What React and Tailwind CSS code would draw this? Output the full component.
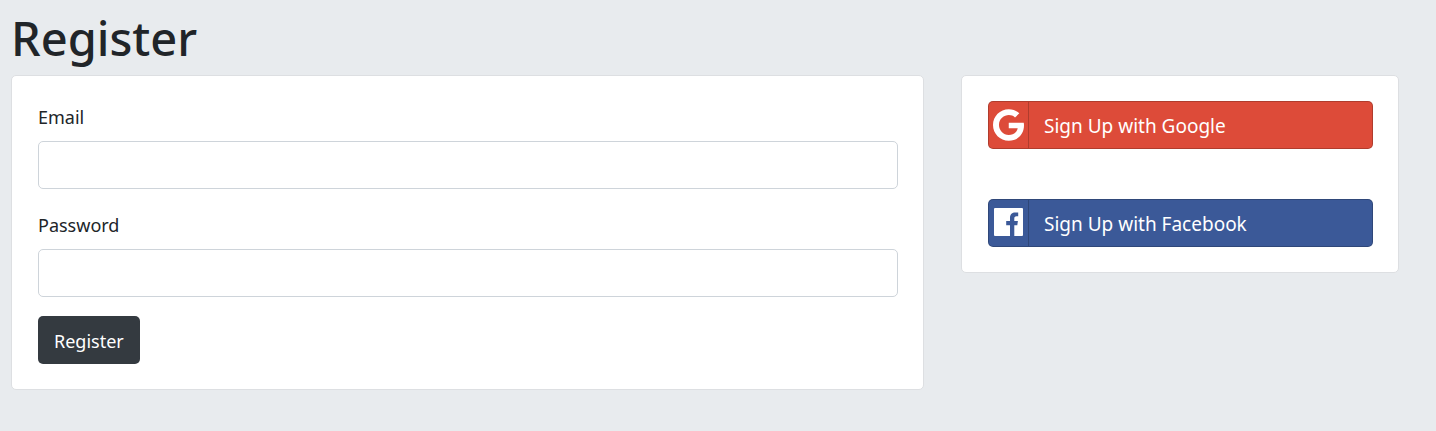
function GoogleIcon() {
  return (
    <svg viewBox="0 8 488 496" className="h-8 w-[31px]" fill="currentColor" aria-hidden="true">
      <path d="M488 261.8C488 403.3 391.1 504 248 504 110.8 504 0 393.2 0 256S110.8 8 248 8c66.8 0 123 24.5 166.3 64.9l-67.5 64.9C258.5 52.6 94.3 116.6 94.3 256c0 86.5 69.1 156.6 153.7 156.6 98.2 0 135-70.4 140.8-106.9H248v-85.3h236.1c2.3 12.7 3.9 24.9 3.9 41.4z" />
    </svg>
  );
}

function FacebookIcon() {
  return (
    <svg viewBox="0 0 29 28" className="mb-0.5 h-7 w-[29px]" fill="currentColor" aria-hidden="true">
      <path d="M1 0H28Q29 0 29 1V27Q29 28 28 28H20.3V17.2H23.3L23.9 13H20.3V10.6C20.3 9.2 20.8 8.3 22.5 8.3H24.2V4.6C23.6 4.5 22.5 4.4 21.2 4.4C18.2 4.4 16 6.2 16 9.7V13H12.2V17.2H16V28H1Q0 28 0 27V1Q0 0 1 0Z" />
    </svg>
  );
}

function Field({ id, label, type }) {
  return (
    <div>
      <label htmlFor={id} className="mb-2 block leading-8">
        {label}
      </label>
      <input
        id={id}
        name={id}
        type={type}
        className="block h-12 w-full rounded-[5px] border border-[#ced4da] bg-white px-4"
      />
    </div>
  );
}

function SocialLink({ href, className, icon, children }) {
  return (
    <a
      href={href}
      className={`flex h-12 items-stretch rounded-[5px] border border-black/20 text-[19px] text-white ${className}`}
    >
      <span className="flex w-10 shrink-0 items-center justify-center border-r border-black/20">
        {icon}
      </span>
      <span className="pl-[15px] leading-[48px]">{children}</span>
    </a>
  );
}

export default function App() {
  return (
    <main className="min-h-screen bg-[#e8ebee] pr-[37px] pb-10 pl-[11px] font-['Noto_Sans','Open_Sans',sans-serif] text-lg text-[#212529]">
      <h1 className="pt-2 pb-[7px] text-[47px] leading-[60px] font-medium">Register</h1>
      <div className="grid grid-cols-12 items-start gap-[37px]">
        <form className="col-span-8 rounded-[5px] border border-[#dddfe2] bg-white py-[25px] pr-[25px] pl-[26px]">
          <div className="grid gap-5">
            <Field id="email" label="Email" type="email" />
            <Field id="password" label="Password" type="password" />
          </div>
          <button
            type="submit"
            className="mt-[19px] block h-12 rounded-[5px] bg-[#343a40] px-4 pt-0.5 text-white"
          >
            Register
          </button>
        </form>
        <section className="col-span-4 grid gap-[50px] rounded-[5px] border border-[#dddfe2] bg-white py-[25px] pr-[25px] pl-[26px]">
          <SocialLink href="#google" className="bg-[#dd4b39]" icon={<GoogleIcon />}>
            Sign Up with Google
          </SocialLink>
          <SocialLink href="#facebook" className="bg-[#3b5998]" icon={<FacebookIcon />}>
            Sign Up with Facebook
          </SocialLink>
        </section>
      </div>
    </main>
  );
}
